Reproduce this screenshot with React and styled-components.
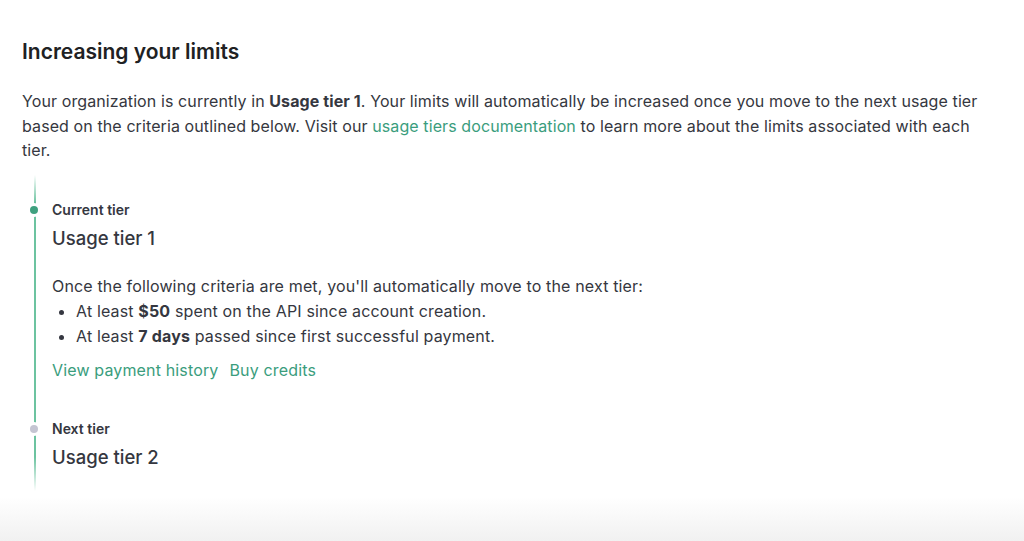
import React from "react";
import styled, { createGlobalStyle } from "styled-components";

const GlobalStyle = createGlobalStyle`
  html, body {
    margin: 0;
    padding: 0;
    background: #ffffff;
  }
  body {
    font-family: Inter, "Noto Sans", sans-serif;
    color: #353740;
    -webkit-font-smoothing: antialiased;
  }
`;

const Screen = styled.div`
  height: 541px;
  display: flex;
  flex-direction: column;
  overflow: hidden;
`;

const Section = styled.section`
  padding: 36px 22px 0 22px;
  width: 966px;
`;

const Title = styled.h2`
  margin: 0;
  font-size: 21px;
  line-height: 32px;
  font-weight: 600;
  letter-spacing: 0;
  color: #202123;
`;

const Intro = styled.p`
  margin: 21px 0 0 0;
  font-size: 16px;
  line-height: 24.5px;
  letter-spacing: 0.1px;
`;

const Link = styled.a`
  color: #3a9d7d;
  text-decoration: none;
  cursor: pointer;
`;

const Timeline = styled.div`
  position: relative;
  margin: 12px 0 0 12px;
  padding: 26px 0 22px 18px;

  &::before {
    content: "";
    position: absolute;
    left: -0.5px;
    top: 0;
    bottom: 0;
    width: 2px;
    background: linear-gradient(
      to bottom,
      rgba(25, 195, 125, 0) 0px,
      #6cc3a0 28px,
      #6cc3a0 calc(100% - 34px),
      rgba(25, 195, 125, 0) 100%
    );
  }
`;

const Step = styled.div`
  position: relative;
  & + & {
    margin-top: 38px;
  }

  &::before {
    content: "";
    position: absolute;
    left: -22px;
    top: 5px;
    width: 8px;
    height: 8px;
    border-radius: 50%;
    background: ${(p) => (p.$active ? "#3fa07f" : "#c5c5d2")};
    box-shadow: 0 0 0 3px #ffffff;
  }
`;

const StepLabel = styled.div`
  font-size: 14px;
  line-height: 18px;
  font-weight: 600;
  color: #353740;
`;

const StepName = styled.div`
  margin-top: 7px;
  font-size: 18.5px;
  line-height: 24px;
  font-weight: 500;
  color: #353740;
`;

const Criteria = styled.div`
  margin-top: 24px;
  font-size: 16px;
  line-height: 25px;
  letter-spacing: 0.15px;
`;

const List = styled.ul`
  margin: 0;
  padding-left: 24px;
  li {
    line-height: 25.5px;
  }
`;

const Actions = styled.div`
  display: flex;
  gap: 11px;
  margin-top: 8px;
  font-size: 16px;
  line-height: 24px;
  letter-spacing: 0.15px;
`;

const Shade = styled.div`
  margin-top: auto;
  height: 44px;
  background: linear-gradient(to bottom, rgba(240, 240, 240, 0), #f1f1f1);
`;

export default function App() {
  return (
    <>
      <GlobalStyle />
      <Screen>
        <Section>
          <Title>Increasing your limits</Title>
          <Intro>
            Your organization is currently in <strong>Usage tier 1</strong>.
            Your limits will automatically be increased once you move to the
            next usage tier based on the criteria outlined below. Visit our{" "}
            <Link>usage tiers documentation</Link> to learn more about the
            limits associated with each tier.
          </Intro>
          <Timeline>
            <Step $active>
              <StepLabel>Current tier</StepLabel>
              <StepName>Usage tier 1</StepName>
              <Criteria>
                Once the following criteria are met, you'll automatically move
                to the next tier:
                <List>
                  <li>
                    At least <strong>$50</strong> spent on the API since account
                    creation.
                  </li>
                  <li>
                    At least <strong>7 days</strong> passed since first
                    successful payment.
                  </li>
                </List>
              </Criteria>
              <Actions>
                <Link>View payment history</Link>
                <Link>Buy credits</Link>
              </Actions>
            </Step>
            <Step>
              <StepLabel>Next tier</StepLabel>
              <StepName>Usage tier 2</StepName>
            </Step>
          </Timeline>
        </Section>
        <Shade />
      </Screen>
    </>
  );
}
